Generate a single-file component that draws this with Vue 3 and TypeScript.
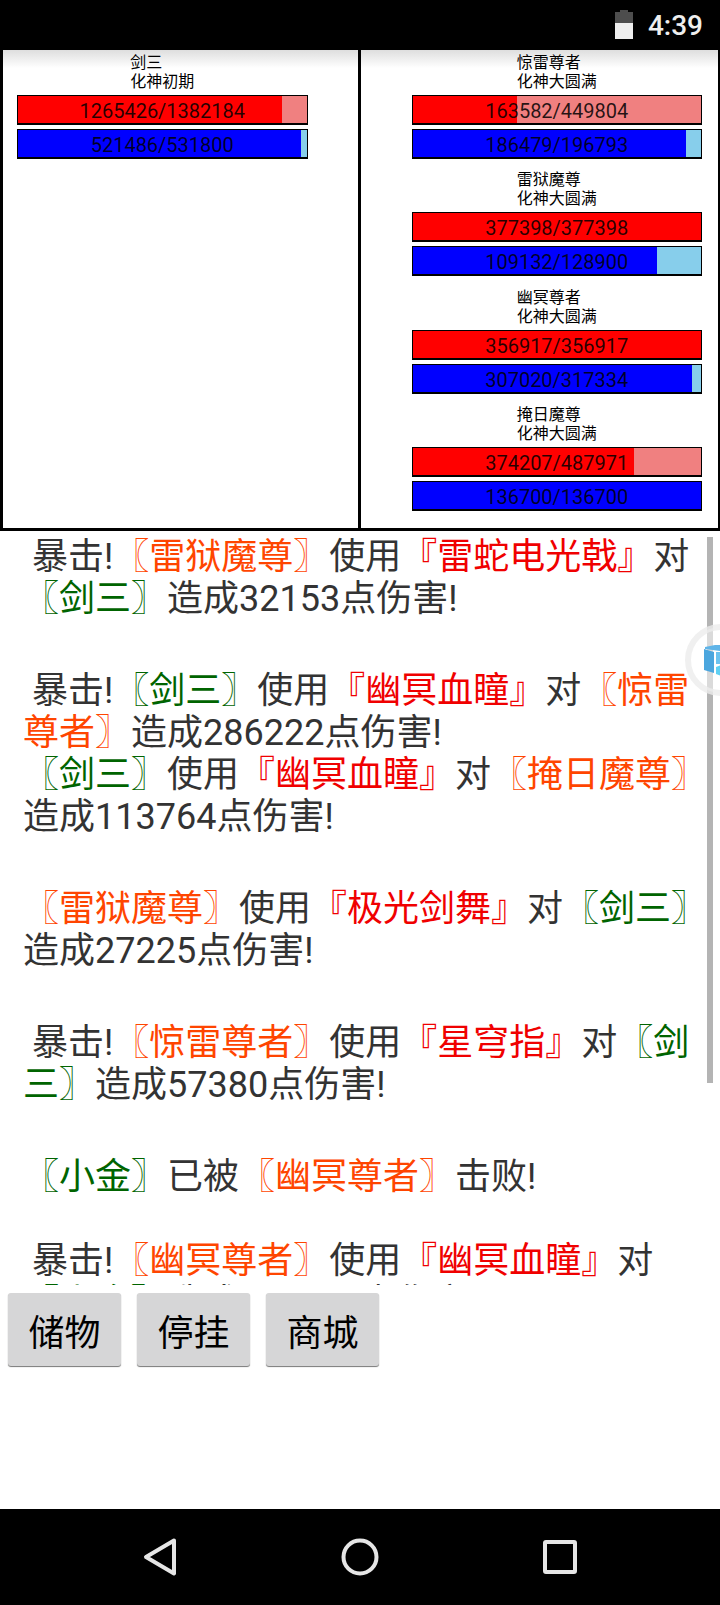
<script setup lang="ts">
interface Gauge { now: number; max: number }
interface Fighter { name: string; level: string; hp: Gauge; mp: Gauge }
interface Part { text: string; tone?: 'ally' | 'enemy' | 'skill' }

const allies: Fighter[] = [
  { name: '剑三', level: '化神初期', hp: { now: 1265426, max: 1382184 }, mp: { now: 521486, max: 531800 } },
]
const enemies: Fighter[] = [
  { name: '惊雷尊者', level: '化神大圆满', hp: { now: 163582, max: 449804 }, mp: { now: 186479, max: 196793 } },
  { name: '雷狱魔尊', level: '化神大圆满', hp: { now: 377398, max: 377398 }, mp: { now: 109132, max: 128900 } },
  { name: '幽冥尊者', level: '化神大圆满', hp: { now: 356917, max: 356917 }, mp: { now: 307020, max: 317334 } },
  { name: '掩日魔尊', level: '化神大圆满', hp: { now: 374207, max: 487971 }, mp: { now: 136700, max: 136700 } },
]
const sides = [
  { id: 'allies', fighters: allies },
  { id: 'enemies', fighters: enemies },
]

const ally = (n: string): Part => ({ text: `〖${n}〗`, tone: 'ally' })
const enemy = (n: string): Part => ({ text: `〖${n}〗`, tone: 'enemy' })
const skill = (n: string): Part => ({ text: `『${n}』`, tone: 'skill' })
const say = (text: string): Part => ({ text })

const log: Part[][][] = [
  [[say(' 暴击!'), enemy('雷狱魔尊'), say('使用'), skill('雷蛇电光戟'), say('对'), ally('剑三'), say('造成32153点伤害!')]],
  [
    [say(' 暴击!'), ally('剑三'), say('使用'), skill('幽冥血瞳'), say('对'), enemy('惊雷尊者'), say('造成286222点伤害!')],
    [ally('剑三'), say('使用'), skill('幽冥血瞳'), say('对'), enemy('掩日魔尊'), say('造成113764点伤害!')],
  ],
  [[enemy('雷狱魔尊'), say('使用'), skill('极光剑舞'), say('对'), ally('剑三'), say('造成27225点伤害!')]],
  [[say(' 暴击!'), enemy('惊雷尊者'), say('使用'), skill('星穹指'), say('对'), ally('剑三'), say('造成57380点伤害!')]],
  [[ally('小金'), say('已被'), enemy('幽冥尊者'), say('击败!')]],
  [[say(' 暴击!'), enemy('幽冥尊者'), say('使用'), skill('幽冥血瞳'), say('对'), ally('小金'), say('造成286222点伤害!')]],
]

const actions = ['储物', '停挂', '商城']
const share = (g: Gauge) => ({ width: `${(g.now / g.max) * 100}%` })
</script>

<template>
  <div class="screen">
    <header class="status">
      <svg class="battery" viewBox="0 0 20 30" aria-hidden="true">
        <path d="M6 0h8v2h5v12H1V2h5z" fill="#4d4d4d" />
        <path d="M1 13h18v16H1z" fill="#eee" />
      </svg>
      <time>4:39</time>
    </header>

    <section class="arena">
      <div v-for="s in sides" :key="s.id" class="side" :class="s.id">
        <article v-for="f in s.fighters" :key="f.name" class="fighter">
          <div class="title">
            <div>{{ f.name }}</div>
            <div>{{ f.level }}</div>
          </div>
          <div class="bar hp">
            <div class="fill" :style="share(f.hp)"></div>
            <span>{{ f.hp.now }}/{{ f.hp.max }}</span>
          </div>
          <div class="bar mp">
            <div class="fill" :style="share(f.mp)"></div>
            <span>{{ f.mp.now }}/{{ f.mp.max }}</span>
          </div>
        </article>
      </div>
    </section>

    <main class="log">
      <div class="entries">
        <div v-for="(group, i) in log" :key="i" class="group">
          <p v-for="(line, j) in group" :key="j"><span v-for="(p, k) in line" :key="k" :class="p.tone">{{ p.text }}</span></p>
        </div>
      </div>
      <div class="thumb"></div>
      <div class="bubble">
        <svg viewBox="0 0 72 72" aria-hidden="true">
          <circle cx="36" cy="36" r="33" fill="#fff" fill-opacity=".5" stroke="#ececec" stroke-opacity=".8" stroke-width="6" />
          <path d="M20 23l10-2h12l10 2v2l-16 2-16-2z" fill="#5fb4e8" />
          <path d="M19 25l10 3v21l-10-3z" fill="#4ba6de" />
          <path d="M31 28h10v12H31z" fill="#6cc3ef" />
          <path d="M53 25l-10 3v21l10-3z" fill="#4ba6de" />
          <path d="M31 43l5-2 5 2v7l-5 2-5-2z" fill="#5fd0f2" />
        </svg>
      </div>
    </main>

    <div class="actions">
      <button v-for="a in actions" :key="a" type="button">{{ a }}</button>
    </div>

    <nav class="nav">
      <button type="button" aria-label="返回">
        <svg viewBox="0 0 40 40"><path d="M34 3.500L6 20l28 16.500z" /></svg>
      </button>
      <button type="button" aria-label="主页">
        <svg viewBox="0 0 40 40"><circle cx="20" cy="20" r="16.500" /></svg>
      </button>
      <button type="button" aria-label="最近任务">
        <svg viewBox="0 0 40 40"><rect x="5" y="5" width="30" height="30" rx="1" /></svg>
      </button>
    </nav>
  </div>
</template>

<style>
body {
  margin: 0;
  background: #fff;
}
</style>

<style scoped>
.screen {
  display: flex;
  flex-direction: column;
  height: 100vh;
  overflow: hidden;
  background: #fff;
  color: #000;
  font-family: Roboto, "Noto Sans CJK SC", sans-serif;
  text-spacing-trim: space-all;
}
.status {
  display: flex;
  flex: none;
  align-items: center;
  justify-content: flex-end;
  gap: 14px;
  height: 50px;
  padding-right: 17px;
  background: #000;
  color: #eee;
  font-size: 28px;
  font-weight: 500;
}
.battery {
  width: 20px;
  height: 30px;
}
.arena {
  display: flex;
  flex: none;
  box-sizing: border-box;
  min-height: 481px;
  gap: 3px;
  padding: 0 2px 3px 3px;
  background: #000;
}
.side {
  display: flex;
  flex: 1;
  flex-direction: column;
  justify-content: space-between;
  box-sizing: border-box;
  padding: 3px 16px 17px 51px;
  background: linear-gradient(#dedede, #fff 18px);
}
.allies {
  padding: 3px 50px 17px 14px;
}
.fighter {
  display: flex;
  flex-direction: column;
  gap: 4px;
}
.title {
  align-self: center;
  font-size: 16px;
  line-height: 19px;
}
.bar {
  position: relative;
  box-sizing: border-box;
  height: 30px;
  border: 1px solid #000;
  border-bottom-width: 2px;
  text-align: center;
  font-size: 20px;
  line-height: 30px;
  color: rgba(0, 0, 0, 0.85);
}
.bar span {
  position: relative;
}
.fill {
  position: absolute;
  inset: 0 auto 0 0;
}
.hp { background: #f08080; }
.hp .fill { background: #f00; }
.mp { background: #87ceeb; }
.mp .fill { background: #00f; }

.log {
  position: relative;
  flex: none;
  height: 47vh;
  overflow: hidden;
}
.entries {
  padding: 5px 11px 0 23px;
  font-size: 36px;
  line-height: 42px;
  color: #333;
}
.group {
  margin-bottom: 50px;
}
.group:nth-last-child(2) {
  margin-bottom: 42px;
}
.group p {
  margin: 0;
  white-space: pre-wrap;
}
.ally { color: #006400; }
.enemy { color: #ff4500; }
.skill { color: #f00000; }
.thumb {
  position: absolute;
  top: 6px;
  right: 7px;
  width: 6px;
  height: 546px;
  background: #b4b4b4;
}
.bubble {
  position: absolute;
  top: 93px;
  right: -37px;
  width: 72px;
  height: 72px;
}
.bubble svg {
  display: block;
}
.actions {
  display: flex;
  flex: 1;
  align-items: flex-start;
  gap: 16px;
  padding: 8px;
}
.actions button {
  width: 113px;
  height: 73px;
  padding: 0;
  border: 0;
  border-radius: 3px;
  background: #d6d6d7;
  box-shadow: 0 1px 1px #777;
  color: #000;
  font: inherit;
  font-size: 36px;
}
.nav {
  display: flex;
  flex: none;
  height: 96px;
  padding: 0 60px;
  background: #000;
}
.nav button {
  display: flex;
  flex: 1;
  align-items: center;
  justify-content: center;
  border: 0;
  padding: 0;
  background: none;
}
.nav svg {
  width: 40px;
  height: 40px;
  fill: none;
  stroke: #e6e6e6;
  stroke-width: 4;
  stroke-linejoin: round;
}
</style>
